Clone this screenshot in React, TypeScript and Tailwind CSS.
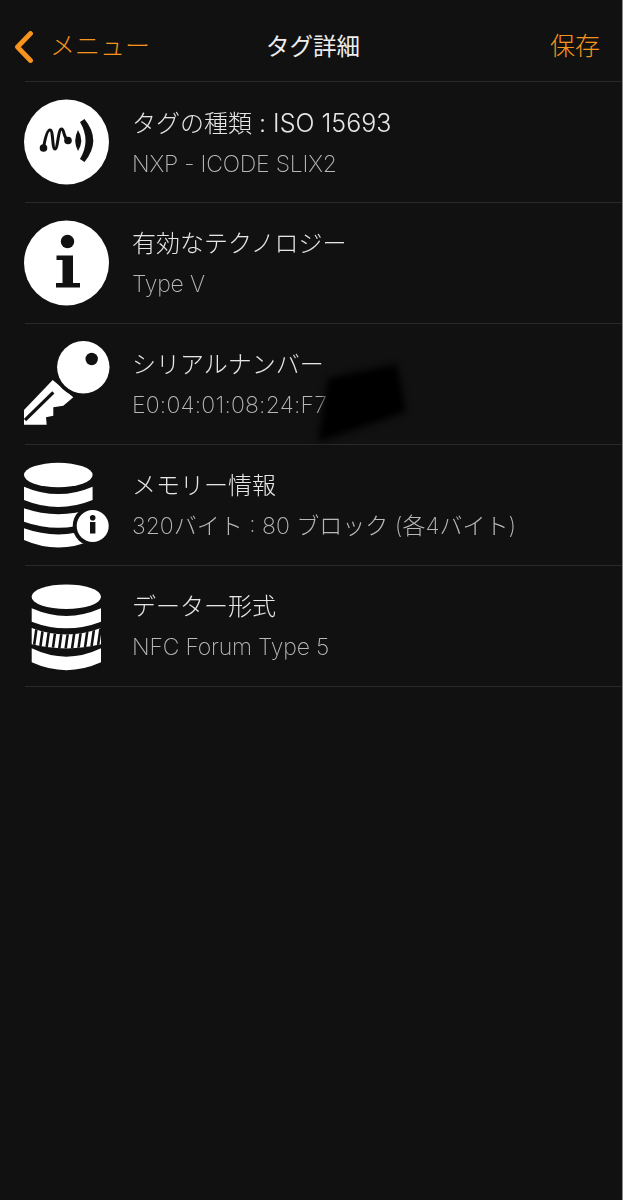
import React from "react";

const font = { fontFamily: '"Inter","Noto Sans CJK JP",sans-serif' };

function SignalIcon() {
  return (
    <svg width="86" height="86" viewBox="0 0 86 86">
      <circle cx="42.5" cy="43" r="42.5" fill="#fff" />
      <g fill="none" stroke="#111" strokeWidth="3" strokeLinejoin="round" strokeLinecap="round">
        <path d="M19.5 49 C21 40 23 31 26 31 C29.5 31 28 50 31 50 C34 50 34 30 37.5 30 C40.5 30 39 38 44 41.5" />
      </g>
      <circle cx="19.5" cy="49" r="3.8" fill="#111" />
      <circle cx="44" cy="41.5" r="3.8" fill="#111" />
      <path d="M54 31 Q60.5 41.5 54 52 Q48.5 41.5 54 31 Z" fill="#111" />
      <path d="M56 23 L60.5 20 Q78 41.5 60.5 63 L56 60 Q67 41.5 56 23 Z" fill="#111" />
    </svg>
  );
}

function InfoIcon() {
  return (
    <svg width="86" height="86" viewBox="0 0 86 86">
      <circle cx="42.5" cy="43" r="42.5" fill="#fff" />
      <circle cx="43.5" cy="21.5" r="6.7" fill="#111" />
      <path d="M32.5 35.5 H49 V63 H56 V67.5 H32 V63 H38.5 V40 H32.5 Z" fill="#111" />
    </svg>
  );
}

function KeyIcon() {
  return (
    <svg width="90" height="90" viewBox="0 0 90 90">
      <path d="M28.7 41 L0 71 V85.7 H22.7 L22 78.3 L29.3 76.7 V68.3 L39.3 66.7 L49.3 58.3 Z" fill="#fff" />
      <path d="M29.3 53.3 L1 81" stroke="#111" strokeWidth="3.2" fill="none" />
      <circle cx="59.3" cy="28.3" r="30" fill="#111" />
      <circle cx="59.3" cy="28.3" r="26.2" fill="#fff" />
      <circle cx="67.7" cy="20" r="6.2" fill="#111" />
    </svg>
  );
}

function DbInfoIcon() {
  return (
    <svg width="90" height="90" viewBox="0 0 90 90">
      <ellipse cx="34.3" cy="15" rx="34.3" ry="12.3" fill="#fff" />
      <path d="M0 26.7 Q34.3 41.5 68.6 26.7 V40 Q34.3 54 0 40 Z" fill="#fff" />
      <path d="M0 48.3 Q34.3 60 68.6 48.3 V61.7 Q34.3 74 0 61.7 Z" fill="#fff" />
      <path d="M0 68.3 Q34.3 80.5 68.6 68.3 V80 Q34.3 95 0 80 Z" fill="#fff" />
      <circle cx="68.7" cy="66" r="20" fill="#111" />
      <circle cx="68.7" cy="66" r="16" fill="#fff" />
      <circle cx="68.7" cy="57.7" r="2.8" fill="#111" />
      <rect x="66" y="62" width="5.4" height="11.5" fill="#111" />
    </svg>
  );
}

function DbFormatIcon() {
  const xs = [0, 1, 2, 3, 4, 5, 6, 7, 8, 9, 10];
  return (
    <svg width="90" height="90" viewBox="0 0 90 90">
      <defs>
        <clipPath id="band">
          <path d="M7.7 47 Q42.3 60 77 47 V63.3 Q42.3 71.5 7.7 63.3 Z" />
        </clipPath>
      </defs>
      <ellipse cx="42.3" cy="15.7" rx="34.7" ry="12.3" fill="#fff" />
      <path d="M7.7 27.3 Q42.3 42.5 77 27.3 V40.7 Q42.3 54 7.7 40.7 Z" fill="#fff" />
      <g clipPath="url(#band)">
        <rect x="7" y="44" width="71" height="30" fill="#fff" />
        {xs.map((i) => (
          <path key={i} d={`M${13 + i * 6.4} 44 L${9 + i * 6.4} 72`} stroke="#111" strokeWidth="2.6" />
        ))}
      </g>
      <path d="M7.7 67.3 Q42.3 84 77 67.3 V81.3 Q42.3 97 7.7 81.3 Z" fill="#fff" />
    </svg>
  );
}

const rows = [
  {
    icon: <SignalIcon />,
    title: (
      <>
        タグの種類<span className="text-[25px]"> : ISO 15693</span>
      </>
    ),
    sub: "NXP - ICODE SLIX2",
    track: "tracking-[-0.2px]",
  },
  { icon: <InfoIcon />, title: "有効なテクノロジー", sub: "Type V", track: "tracking-[-0.2px]" },
  { icon: <KeyIcon />, title: "シリアルナンバー", sub: "E0:04:01:08:24:F7", track: "tracking-[0.2px]" },
  { icon: <DbInfoIcon />, title: "メモリー情報", sub: "320バイト : 80 ブロック (各4バイト)", track: "tracking-normal" },
  { icon: <DbFormatIcon />, title: "データー形式", sub: "NFC Forum Type 5", track: "tracking-[-0.2px]" },
];

export default function App() {
  return (
    <div className="relative h-[1200px] w-[623px] overflow-hidden bg-[#111111]" style={font}>
      <header className="flex h-[81px] items-center justify-between pl-[14px] pr-[23px] pt-[13px]">
        <div className="flex items-center gap-[17px] text-[25px] font-light text-[#f7941e]">
          <svg width="19" height="32" viewBox="0 0 19 32">
            <path d="M16.5 2.5 L3.5 16 L16.5 29.5" fill="none" stroke="#f7941e" strokeWidth="4.8" strokeLinecap="round" strokeLinejoin="round" />
          </svg>
          <span>メニュー</span>
        </div>
        <span className="absolute left-[266px] text-[23.5px] font-normal text-[#ededed]">タグ詳細</span>
        <span className="text-[25px] font-light text-[#f7941e]">保存</span>
      </header>
      <div className="ml-[25px] border-t border-[#2a2a2a]">
        {rows.map((r) => (
          <div key={r.sub} className="flex h-[121px] border-b border-[#2a2a2a]">
            <div className="-ml-[1px] flex h-full w-[108px] shrink-0 items-center">{r.icon}</div>
            <div className="flex flex-col pt-[22px] [will-change:transform]">
              <div className="text-[24px] leading-[38px] font-light text-[#e6e6e6]">{r.title}</div>
              <div className={`mt-[2px] text-[23px] leading-[38px] font-extralight text-[#b8b8b8] ${r.track}`}>{r.sub}</div>
            </div>
          </div>
        ))}
      </div>
      <svg className="absolute left-[305px] top-[350px]" width="115" height="105" viewBox="0 0 115 105">
        <defs>
          <filter id="smudge" x="-20%" y="-20%" width="140%" height="140%">
            <feGaussianBlur stdDeviation="3.5" />
          </filter>
        </defs>
        <polygon points="23,28 92,14 101,62 13,92" fill="#000" filter="url(#smudge)" />
      </svg>
      <div className="absolute right-0 top-0 h-full w-[1px] bg-[#8a8a8a]" />
    </div>
  );
}
